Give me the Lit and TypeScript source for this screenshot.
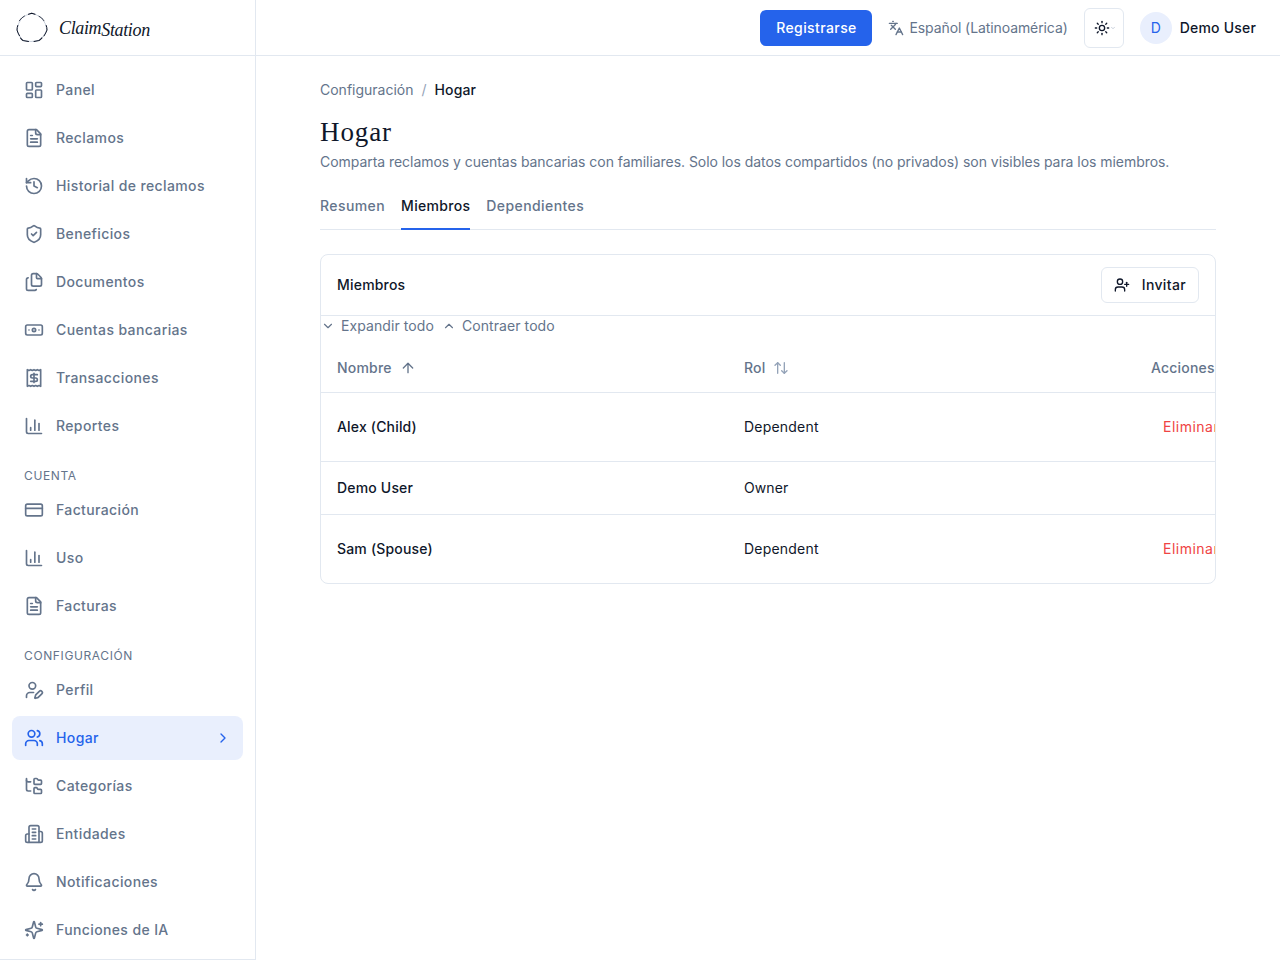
import { LitElement, html, css, svg } from "lit";
import { customElement } from "lit/decorators.js";

const I: Record<string, any> = {
  dash: svg`<rect x="3" y="3" width="7" height="9" rx="1"/><rect x="14" y="3" width="7" height="5" rx="1"/><rect x="14" y="12" width="7" height="9" rx="1"/><rect x="3" y="16" width="7" height="5" rx="1"/>`,
  file: svg`<path d="M15 2H6a2 2 0 0 0-2 2v16a2 2 0 0 0 2 2h12a2 2 0 0 0 2-2V7Z"/><path d="M14 2v4a2 2 0 0 0 2 2h4"/><path d="M10 9H8"/><path d="M16 13H8"/><path d="M16 17H8"/>`,
  history: svg`<path d="M3 12a9 9 0 1 0 9-9 9.75 9.75 0 0 0-6.74 2.74L3 8"/><path d="M3 3v5h5"/><path d="M12 7v5l4 2"/>`,
  shield: svg`<path d="M20 13c0 5-3.5 7.5-7.66 8.95a1 1 0 0 1-.67-.01C7.5 20.5 4 18 4 13V6a1 1 0 0 1 1-1c2 0 4.5-1.2 6.24-2.72a1.17 1.17 0 0 1 1.52 0C14.51 3.81 17 5 19 5a1 1 0 0 1 1 1z"/><path d="m9 12 2 2 4-4"/>`,
  files: svg`<path d="M15 2h-4a2 2 0 0 0-2 2v11a2 2 0 0 0 2 2h8a2 2 0 0 0 2-2V8"/><path d="M16.706 2.706A2.4 2.4 0 0 0 15 2v5a1 1 0 0 0 1 1h5a2.4 2.4 0 0 0-.706-1.706z"/><path d="M5 7a2 2 0 0 0-2 2v11a2 2 0 0 0 2 2h8a2 2 0 0 0 1.732-1"/>`,
  bank: svg`<rect x="2" y="6" width="20" height="12" rx="2"/><circle cx="12" cy="12" r="2"/><path d="M6 12h.01M18 12h.01"/>`,
  receipt: svg`<path d="M4 2v20l2-1 2 1 2-1 2 1 2-1 2 1 2-1 2 1V2l-2 1-2-1-2 1-2-1-2 1-2-1-2 1Z"/><path d="M16 8h-6a2 2 0 1 0 0 4h4a2 2 0 1 1 0 4H8"/><path d="M12 17.5v-11"/>`,
  chart: svg`<path d="M3 3v16a2 2 0 0 0 2 2h16"/><path d="M18 17V9"/><path d="M13 17V5"/><path d="M8 17v-3"/>`,
  card: svg`<rect x="2" y="5" width="20" height="14" rx="2"/><path d="M2 10h20"/>`,
  userpen: svg`<path d="M11.5 15H7a4 4 0 0 0-4 4v2"/><path d="M21.378 16.626a1 1 0 0 0-3.004-3.004l-4.01 4.012a2 2 0 0 0-.506.854l-.837 2.87a.5.5 0 0 0 .62.62l2.87-.837a2 2 0 0 0 .854-.506z"/><circle cx="10" cy="7" r="4"/>`,
  users: svg`<path d="M16 21v-2a4 4 0 0 0-4-4H6a4 4 0 0 0-4 4v2"/><path d="M16 3.128a4 4 0 0 1 0 7.744"/><path d="M22 21v-2a4 4 0 0 0-3-3.87"/><circle cx="9" cy="7" r="4"/>`,
  tree: svg`<path d="M20 10a1 1 0 0 0 1-1V6a1 1 0 0 0-1-1h-2.5a1 1 0 0 1-.8-.4l-.9-1.2A1 1 0 0 0 15 3h-2a1 1 0 0 0-1 1v5a1 1 0 0 0 1 1Z"/><path d="M20 21a1 1 0 0 0 1-1v-3a1 1 0 0 0-1-1h-2.9a1 1 0 0 1-.88-.55l-.42-.85a1 1 0 0 0-.92-.6H13a1 1 0 0 0-1 1v5a1 1 0 0 0 1 1Z"/><path d="M3 5a2 2 0 0 0 2 2h3"/><path d="M3 3v13a2 2 0 0 0 2 2h3"/>`,
  building: svg`<path d="M6 22V4a2 2 0 0 1 2-2h8a2 2 0 0 1 2 2v18Z"/><path d="M6 12H4a2 2 0 0 0-2 2v6a2 2 0 0 0 2 2h2"/><path d="M18 9h2a2 2 0 0 1 2 2v9a2 2 0 0 1-2 2h-2"/><path d="M10 6h4"/><path d="M10 10h4"/><path d="M10 14h4"/><path d="M10 18h4"/>`,
  bell: svg`<path d="M10.268 21a2 2 0 0 0 3.464 0"/><path d="M3.262 15.326A1 1 0 0 0 4 17h16a1 1 0 0 0 .74-1.673C19.41 13.956 18 12.499 18 8A6 6 0 0 0 6 8c0 4.499-1.411 5.956-2.738 7.326"/>`,
  sparkles: svg`<path d="M9.937 15.5A2 2 0 0 0 8.5 14.063l-6.135-1.582a.5.5 0 0 1 0-.962L8.5 9.936A2 2 0 0 0 9.937 8.5l1.582-6.135a.5.5 0 0 1 .963 0L14.063 8.5A2 2 0 0 0 15.5 9.937l6.135 1.581a.5.5 0 0 1 0 .964L15.5 14.063a2 2 0 0 0-1.437 1.437l-1.582 6.135a.5.5 0 0 1-.963 0z"/><path d="M20 3v4"/><path d="M22 5h-4"/><path d="M4 17v2"/><path d="M5 18H3"/>`,
  lang: svg`<path d="m5 8 6 6"/><path d="m4 14 6-6 2-3"/><path d="M2 5h12"/><path d="M7 2h1"/><path d="m22 22-5-10-5 10"/><path d="M14 18h6"/>`,
  sun: svg`<circle cx="12" cy="12" r="4"/><path d="M12 2v2"/><path d="M12 20v2"/><path d="m4.93 4.93 1.41 1.41"/><path d="m17.66 17.66 1.41 1.41"/><path d="M2 12h2"/><path d="M20 12h2"/><path d="m6.34 17.66-1.41 1.41"/><path d="m19.07 4.93-1.41 1.41"/>`,
  userplus: svg`<path d="M16 21v-2a4 4 0 0 0-4-4H6a4 4 0 0 0-4 4v2"/><circle cx="9" cy="7" r="4"/><path d="M19 8v6"/><path d="M22 11h-6"/>`,
  down: svg`<path d="m6 9 6 6 6-6"/>`,
  up: svg`<path d="m18 15-6-6-6 6"/>`,
  right: svg`<path d="m9 18 6-6-6-6"/>`,
  arrowup: svg`<path d="m5 12 7-7 7 7"/><path d="M12 19V5"/>`,
  updown: svg`<path d="m21 16-4 4-4-4"/><path d="M17 20V4"/><path d="m3 8 4-4 4 4"/><path d="M7 4v16"/>`,
};

const icon = (n: string, cls = "i20") =>
  html`<svg class=${cls} viewBox="0 0 24 24" fill="none" stroke="currentColor" stroke-linecap="round" stroke-linejoin="round">${I[n]}</svg>`;

const groups: { label?: string; items: [string, string, boolean?][] }[] = [
  { items: [["dash", "Panel"], ["file", "Reclamos"], ["history", "Historial de reclamos"], ["shield", "Beneficios"], ["files", "Documentos"], ["bank", "Cuentas bancarias"], ["receipt", "Transacciones"], ["chart", "Reportes"]] },
  { label: "CUENTA", items: [["card", "Facturación"], ["chart", "Uso"], ["file", "Facturas"]] },
  { label: "CONFIGURACIÓN", items: [["userpen", "Perfil"], ["users", "Hogar", true], ["tree", "Categorías"], ["building", "Entidades"], ["bell", "Notificaciones"], ["sparkles", "Funciones de IA"]] },
];

const members: [string, string, boolean][] = [
  ["Alex (Child)", "Dependent", true],
  ["Demo User", "Owner", false],
  ["Sam (Spouse)", "Dependent", true],
];

@customElement("app-root")
export class AppRoot extends LitElement {
  static styles = css`
    :host { display: flex; height: 960px; overflow: hidden; background: #fff; color: #0f172a; font-family: Inter, "Liberation Sans", sans-serif; font-size: 14px; line-height: 20px; }
    * { box-sizing: border-box; }
    svg { flex: none; display: block; stroke-width: 2; }
    .i20 { width: 20px; height: 20px; }
    .i16 { width: 16px; height: 16px; }
    .i14 { width: 14px; height: 14px; }
    .side { width: 256px; flex: none; border-right: 1px solid #e2e8f0; border-bottom: 1px solid #e2e8f0; display: flex; flex-direction: column; }
    .brand { height: 56px; flex: none; border-bottom: 1px solid #e2e8f0; display: flex; align-items: center; padding-left: 16px; gap: 11px; }
    .logo { width: 32px; height: 32px; }
    .word { font-family: "Liberation Serif", serif; font-style: italic; color: #0f172a; font-size: 18px; letter-spacing: -0.35px; line-height: 24px; display: flex; align-items: baseline; }
    .word span { margin-left: 0; transform: translateY(2px); }
    nav { padding: 12px 12px 0; display: flex; flex-direction: column; }
    .group { display: flex; flex-direction: column; gap: 4px; }
    .group + .group { margin-top: 20px; }
    .label { font-size: 12px; line-height: 16px; letter-spacing: 0.62px; color: #64748b; padding-left: 12px; }
    .item { height: 44px; display: flex; align-items: center; gap: 12px; padding: 0 12px; border-radius: 8px; color: #64748b; font-weight: 450; letter-spacing: 0.38px; }
    .item.on { background: #e9effd; color: #2563eb; }
    .item .chev { margin-left: auto; }
    .main { flex: 1; min-width: 0; display: flex; flex-direction: column; }
    .top { height: 56px; flex: none; border-bottom: 1px solid #e2e8f0; display: flex; align-items: center; justify-content: flex-end; padding-right: 24px; }
    .reg { height: 36px; width: 112px; background: #2563eb; color: #fff; border-radius: 6px; display: flex; align-items: center; justify-content: center; font-weight: 450; letter-spacing: 0.4px; }
    .lang { display: flex; align-items: center; gap: 5px; margin-left: 16px; color: #64748b; letter-spacing: -0.09px; }
    .theme { width: 40px; height: 40px; margin-left: 16px; border: 1px solid #e2e8f0; border-radius: 6px; display: flex; align-items: center; padding-left: 9px; color: #0f172a; }
    .theme .mini { width: 6px; height: 6px; color: #94a3b8; }
    .avatar { width: 32px; height: 32px; border-radius: 50%; background: #e9effd; color: #2563eb; margin-left: 16px; display: flex; align-items: center; justify-content: center; }
    .name { margin-left: 8px; font-weight: 450; letter-spacing: 0.2px; }
    .content { padding: 24px 64px; }
    .crumb { display: flex; gap: 8px; color: #64748b; }
    .crumb .sep { color: #94a3b8; }
    .crumb b { font-weight: 450; color: #0f172a; letter-spacing: 0.1px; }
    h1 { margin: 16px 0 0; font: 400 27px/32px "Liberation Serif", serif; letter-spacing: 0.9px; }
    .desc { margin: 4px 0 0; color: #64748b; letter-spacing: -0.046px; }
    .tabs { margin-top: 10px; height: 48px; border-bottom: 1px solid #e2e8f0; display: flex; gap: 16px; }
    .tab { height: 48px; padding-top: 2px; display: flex; align-items: center; color: #64748b; font-weight: 450; letter-spacing: 0.42px; border-bottom: 2px solid transparent; }
    .tab.on { color: #0f172a; border-color: #2563eb; letter-spacing: 0.3px; }
    .panel { margin-top: 24px; border: 1px solid #e2e8f0; border-radius: 8px; overflow: hidden; }
    .phead { height: 61px; border-bottom: 1px solid #e2e8f0; display: flex; align-items: center; justify-content: space-between; padding: 0 16px; font-weight: 450; letter-spacing: 0.2px; }
    .invite { height: 36px; padding: 0 12px; border: 1px solid #e2e8f0; border-radius: 6px; display: flex; align-items: center; gap: 12px; letter-spacing: 0.35px; font-weight: 450; }
    .expand { height: 20px; display: flex; align-items: center; color: #64748b; margin-bottom: 8px; gap: 8px; letter-spacing: 0.08px; }
    .tog { display: flex; align-items: center; gap: 6px; }
    .row { display: grid; grid-template-columns: 407px 407px 100px; align-items: center; border-bottom: 1px solid #e2e8f0; }
    .row:last-child { border-bottom: 0; }
    .row > div { padding-left: 16px; white-space: nowrap; }
    .thead { height: 49px; color: #64748b; font-weight: 450; letter-spacing: 0.2px; }
    .th { display: flex; align-items: center; gap: 8px; }
    .th .dim { color: #94a3b8; }
    .r-tall { height: 69px; letter-spacing: 0.2px; }
    .r-short { height: 53px; letter-spacing: 0.1px; }
    .row:last-child.r-tall { height: 68px; }
    .nm { font-weight: 450; letter-spacing: 0.18px; }
    .row > .del { color: #ef4444; padding-left: 28px; letter-spacing: 0.5px; }
  `;

  render() {
    return html`
      <aside class="side">
        <div class="brand">
          <svg class="logo" viewBox="0 0 32 32" fill="none" stroke-linecap="round">
            <path d="M15.700 1.300Q21 2.500 25.700 6Q30 11 31 18Q28 24.500 23 28.500Q15 30.500 7 28.500Q2.500 24 1 18Q2 11 5.700 6Q10.500 2.500 15.700 1.300Z" stroke="#94a3b8" stroke-width="0.5"/>
            <path d="M12.500 2.300Q14 1.700 15.700 1.300Q17.500 1.700 19 2.300" stroke="#0f172a" stroke-width="1.100"/>
            <path d="M3.300 8.800L5.700 6L8.500 4" stroke="#0f172a" stroke-width="0.8"/>
            <path d="M23 4.300L25.700 6L28 8.800" stroke="#0f172a" stroke-width="0.8"/>
            <path d="M1.700 13.500Q1 15.500 1 18Q1.800 21 3.500 23.800" stroke="#0f172a" stroke-width="1"/>
            <path d="M30.300 13.500Q31 15.500 31 18Q30 21 28 24" stroke="#0f172a" stroke-width="1"/>
            <path d="M4.500 26Q5.500 27.500 7 28.500Q9.500 29.200 12.500 29.500" stroke="#0f172a" stroke-width="1.100"/>
            <path d="M18 29.500Q20.500 29.200 23 28.500Q24.500 27.500 26 25.800" stroke="#0f172a" stroke-width="1.100"/>
          </svg>
          <div class="word">Claim<span>Station</span></div>
        </div>
        <nav>
          ${groups.map(g => html`
            <div class="group">
              ${g.label ? html`<div class="label">${g.label}</div>` : ""}
              ${g.items.map(([ic, t, on]) => html`
                <div class="item ${on ? "on" : ""}">${icon(ic)}<span>${t}</span>${on ? icon("right", "i16 chev") : ""}</div>`)}
            </div>`)}
        </nav>
      </aside>
      <div class="main">
        <header class="top">
          <div class="reg">Registrarse</div>
          <div class="lang">${icon("lang", "i16")}<span>Español (Latinoamérica)</span></div>
          <div class="theme">${icon("sun", "i16")}${icon("down", "mini")}</div>
          <div class="avatar">D</div>
          <div class="name">Demo User</div>
        </header>
        <div class="content">
          <div class="crumb"><span>Configuración</span><span class="sep">/</span><b>Hogar</b></div>
          <h1>Hogar</h1>
          <p class="desc">Comparta reclamos y cuentas bancarias con familiares. Solo los datos compartidos (no privados) son visibles para los miembros.</p>
          <div class="tabs">
            <div class="tab">Resumen</div>
            <div class="tab on">Miembros</div>
            <div class="tab">Dependientes</div>
          </div>
          <section class="panel">
            <div class="phead"><span>Miembros</span><div class="invite">${icon("userplus", "i16")}Invitar</div></div>
            <div class="expand">
              <div class="tog">${icon("down", "i14")}Expandir todo</div>
              <div class="tog">${icon("up", "i14")}Contraer todo</div>
            </div>
            <div class="row thead">
              <div class="th">Nombre ${icon("arrowup", "i16")}</div>
              <div class="th">Rol <span class="dim">${icon("updown", "i16")}</span></div>
              <div>Acciones</div>
            </div>
            ${members.map(([n, r, del]) => html`
              <div class="row ${del ? "r-tall" : "r-short"}">
                <div class="nm">${n}</div>
                <div>${r}</div>
                ${del ? html`<div class="del">Eliminar</div>` : html`<div></div>`}
              </div>`)}
          </section>
        </div>
      </div>
    `;
  }
}
